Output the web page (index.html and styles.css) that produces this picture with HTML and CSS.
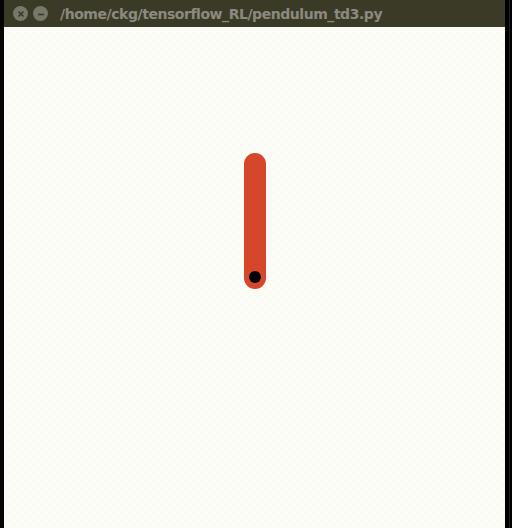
FILE: index.html
```html
<!DOCTYPE html>
<html>
<head>
<meta charset="utf-8">
<link rel="stylesheet" href="styles.css">
</head>
<body>
<div class="screen">
  <div class="edge-left"></div>
  <div class="window">
    <div class="titlebar">
      <div class="buttons">
        <span class="btn btn-close">
          <svg width="14" height="14" viewBox="0 0 14 14"><path d="M4.5 4.5 L9.5 9.5 M9.5 4.5 L4.5 9.5" stroke="#3a3a2a" stroke-width="1.6" fill="none"/></svg>
        </span>
        <span class="btn btn-min">
          <svg width="14" height="14" viewBox="0 0 14 14"><path d="M4 7.5 H10" stroke="#3a3a2a" stroke-width="1.6" fill="none"/></svg>
        </span>
      </div>
      <span class="title">/home/ckg/tensorflow_RL/pendulum_td3.py</span>
    </div>
    <div class="canvas">
      <div class="rod"></div>
      <div class="pivot"></div>
    </div>
  </div>
  <div class="edge-right">
    <div class="edge-gap"></div>
    <div class="edge-dark"></div>
    <div class="edge-light"></div>
    <div class="edge-dark2"></div>
  </div>
</div>
</body>
</html>
```
FILE: styles.css
```css
html, body {
  margin: 0;
  padding: 0;
  background: #000;
}
.screen {
  display: flex;
  width: 512px;
  height: 528px;
  overflow: hidden;
}
.edge-left {
  width: 4px;
  background: #050505;
  flex: none;
}
.window {
  width: 501px;
  flex: none;
  display: flex;
  flex-direction: column;
}
.titlebar {
  height: 27px;
  flex: none;
  background: #3b3a27;
  display: flex;
  align-items: center;
  gap: 12px;
  padding-left: 9px;
  box-sizing: border-box;
}
.buttons {
  display: flex;
  gap: 5px;
  align-items: center;
}
.btn {
  width: 15px;
  height: 15px;
  border-radius: 50%;
  background: #77776a;
  display: flex;
  align-items: center;
  justify-content: center;
}
.title {
  font-family: "DejaVu Sans", sans-serif;
  font-weight: bold;
  font-size: 14px;
  color: #8b8a80;
  letter-spacing: -0.45px;
  padding-top: 1px;
}
.canvas {
  flex: 1;
  position: relative;
  background-color: #fbfbfa;
  background-image:
    radial-gradient(circle, #fafab0 0.6px, transparent 0.8px),
    radial-gradient(circle, #fafab0 0.6px, transparent 0.8px);
  background-size: 8px 8px, 8px 8px;
  background-position: 2px 2px, 6px 6px;
}
.rod {
  position: absolute;
  left: 240px;
  top: 126px;
  width: 22px;
  height: 136px;
  border-radius: 11px;
  background: #d6462b;
}
.pivot {
  position: absolute;
  left: 245px;
  top: 244px;
  width: 12px;
  height: 12px;
  border-radius: 50%;
  background: #000;
}
.edge-right {
  flex: 1;
  display: flex;
}
.edge-gap { width: 1px; background: #000; }
.edge-dark { width: 3px; background: #000; }
.edge-light { width: 1px; background: #202020; }
.edge-dark2 { flex: 1; background: #000; }
```
